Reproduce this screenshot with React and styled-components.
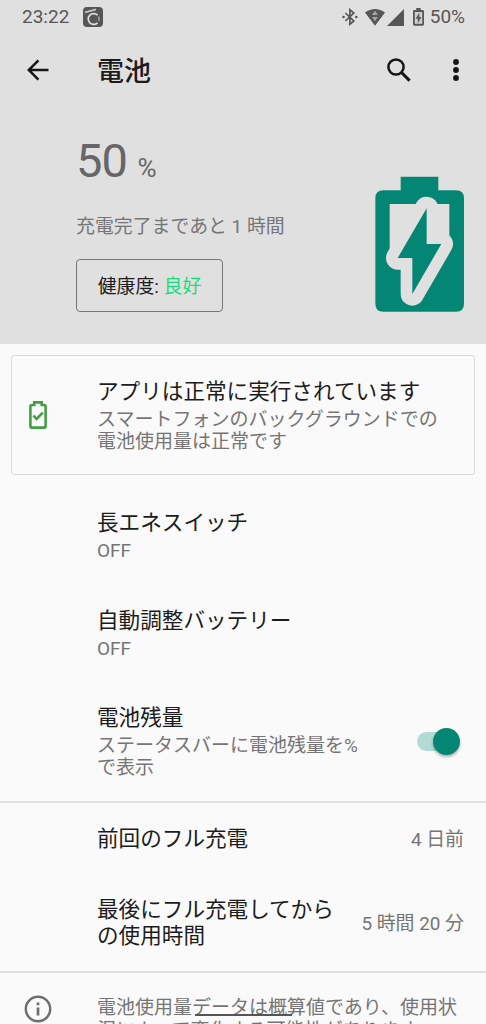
import styled, { createGlobalStyle } from "styled-components";

const GlobalStyle = createGlobalStyle`
  * {
    box-sizing: border-box;
  }

  body {
    margin: 0;
    background: #fafafa;
    color: #1c1c1c;
    font-family: Roboto, "Noto Sans CJK JP", sans-serif;
    overflow: hidden;
  }

  h1, h2, p {
    margin: 0;
    font-weight: 400;
  }

  svg {
    display: block;
    flex-shrink: 0;
  }
`;

function StatusIcons() {
  return (
    <StatusGroup>
      <svg width="16" height="18" viewBox="0 0 16 18">
        <path
          d="M3.4 5 11.8 13 7.9 16.3V1.7L11.8 5 3.4 13"
          fill="none"
          stroke="#565656"
          strokeWidth="1.7"
        />
        <circle cx="1.5" cy="9" r="1.3" fill="#565656" />
        <circle cx="14.3" cy="9" r="1.3" fill="#565656" />
      </svg>
      <svg width="20" height="17" viewBox="0 0 20 17">
        <path d="M0 3.6C5.8-1.1 14.2-1.1 20 3.6L10 16.7Z" fill="#565656" />
        <path d="M10 1.8 13 5.9H7ZM10 12.2 7 8H13Z" fill="#a5a5a5" />
      </svg>
      <svg width="17" height="17" viewBox="0 0 17 17">
        <path d="M17 0V17H0Z" fill="#565656" />
      </svg>
      <ChargeIcon width="11" height="18" viewBox="0 0 11 18">
        <path
          d="M3.3 0H7.7V2H9.6Q11 2 11 3.4V16.3Q11 17.7 9.6 17.7H1.4Q0 17.7 0 16.3V3.4Q0 2 1.4 2H3.3Z"
          fill="#565656"
        />
        <path d="M1.8 4H9.2V15.8H1.8Z" fill="#cfcfcf" />
        <path d="M6.3 4.5V9H8.5L4.8 15.3V10.8H2.6Z" fill="#565656" />
      </ChargeIcon>
      <span>50%</span>
    </StatusGroup>
  );
}

function BatteryGraphic() {
  const bolt = "M231 145V252H275L188 402V294H144Z";

  return (
    <svg width="90" height="136" viewBox="76 48 270 408">
      <path
        d="M153 50H266V91H319Q343 91 343 115V431Q343 455 319 455H101Q77 455 77 431V115Q77 91 101 91H153Z"
        fill="#048675"
      />
      <path d="M120 132H299V230L275 252L144 294L120 268Z" fill="#e0e0e0" />
      <path
        d={bolt}
        fill="#e0e0e0"
        stroke="#e0e0e0"
        strokeWidth="70"
        strokeLinejoin="round"
      />
      <path d={bolt} fill="#048675" />
    </svg>
  );
}

function App() {
  return (
    <>
      <GlobalStyle />
      <Screen>
        <Header>
          <StatusBar>
            <StatusGroup>
              <span>23:22</span>
              <AppBadge width="20" height="20" viewBox="0 0 20 20">
                <rect width="20" height="20" rx="4" fill="#565656" />
                <path
                  d="M14.5 8.2A5.4 5.4 0 1 0 14.5 15.8"
                  fill="none"
                  stroke="#dedede"
                  strokeWidth="1.7"
                />
                <path
                  d="M15.6 9.6A5.4 5.4 0 0 1 15.6 14"
                  fill="none"
                  stroke="#b5b5b5"
                  strokeWidth="1.2"
                />
                <path d="M2 5.4 13 2.4" stroke="#c4c4c4" strokeWidth="1.7" />
              </AppBadge>
            </StatusGroup>
            <StatusIcons />
          </StatusBar>

          <Toolbar>
            <svg width="22" height="22" viewBox="0 0 22 22">
              <path
                d="M21.5 11H2M11.4 1.3 1.7 11 11.4 20.7"
                fill="none"
                stroke="#151515"
                strokeWidth="2.5"
              />
            </svg>
            <h1>電池</h1>
            <svg width="24" height="24" viewBox="0 0 24 24">
              <circle
                cx="9"
                cy="9"
                r="7.6"
                fill="none"
                stroke="#151515"
                strokeWidth="2.5"
              />
              <path d="M14 14 22.6 22.6" stroke="#151515" strokeWidth="3.1" />
            </svg>
            <MoreIcon width="6" height="22" viewBox="0 0 6 22">
              <circle cx="3" cy="3" r="2.9" />
              <circle cx="3" cy="11" r="2.9" />
              <circle cx="3" cy="19" r="2.9" />
            </MoreIcon>
          </Toolbar>

          <Summary>
            <div>
              <Percent>
                50 <small>%</small>
              </Percent>
              <Remaining>充電完了まであと 1 時間</Remaining>
              <Health>
                健康度: <span>良好</span>
              </Health>
            </div>
            <BatteryGraphic />
          </Summary>
        </Header>

        <Card>
          <IconSlot>
            <svg width="18" height="28" viewBox="0 0 18 28">
              <path
                d="M5.3 1.4H12.7V4H15.2Q16.6 4 16.6 5.4V25.2Q16.6 26.6 15.2 26.6H2.8Q1.4 26.6 1.4 25.2V5.4Q1.4 4 2.8 4H5.3Z"
                fill="none"
                stroke="#43a047"
                strokeWidth="2.6"
              />
              <path
                d="M4.4 14.6 7.6 17.8 13.8 11.6"
                fill="none"
                stroke="#43a047"
                strokeWidth="2.6"
              />
            </svg>
          </IconSlot>
          <CardText>
            <Title>アプリは正常に実行されています</Title>
            <Description>
              スマートフォンのバックグラウンドでの
              <br />
              電池使用量は正常です
            </Description>
          </CardText>
        </Card>

        <Row $height={98}>
          <div>
            <Title>長エネスイッチ</Title>
            <Description>OFF</Description>
          </div>
        </Row>
        <Row $height={98}>
          <div>
            <Title>自動調整バッテリー</Title>
            <Description>OFF</Description>
          </div>
        </Row>
        <Row $height={118}>
          <div>
            <Title>電池残量</Title>
            <Description>
              ステータスバーに電池残量を%
              <br />
              で表示
            </Description>
          </div>
          <Toggle>
            <Thumb />
          </Toggle>
        </Row>

        <Divider />

        <Row $height={72}>
          <Title>前回のフル充電</Title>
          <Value>4 日前</Value>
        </Row>
        <Row $height={96}>
          <Title>
            最後にフル充電してから
            <br />
            の使用時間
          </Title>
          <Value>5 時間 20 分</Value>
        </Row>

        <Divider />

        <Footer>
          <IconSlot>
            <svg width="28" height="28" viewBox="0 0 28 28">
              <circle
                cx="14"
                cy="14"
                r="12.2"
                fill="none"
                stroke="#6d6d6d"
                strokeWidth="2.4"
              />
              <path d="M14 12.6V20.6M14 7.6V10.2" stroke="#6d6d6d" strokeWidth="2.7" />
            </svg>
          </IconSlot>
          <Description>
            電池使用量データは概算値であり、使用状
            <br />
            況によって変化する可能性があります
          </Description>
        </Footer>
        <HomeHandle />
      </Screen>
    </>
  );
}

const Screen = styled.main`
  position: relative;
  width: 486px;
  height: 1024px;
  overflow: hidden;
`;

const Header = styled.header`
  height: 344px;
  background: #e0e0e0;
`;

const StatusBar = styled.div`
  display: flex;
  justify-content: space-between;
  height: 34px;
  padding: 0 21px 0 22px;
`;

const StatusGroup = styled.div`
  display: flex;
  align-items: center;
  color: #565656;
  font-size: 19px;
  line-height: 34px;
  gap: 6px;

  svg + svg {
    margin-left: 1px;
  }

  svg + svg + svg {
    margin-left: -4px;
  }
`;

const ChargeIcon = styled.svg`
  && {
    margin-left: 3px;
  }
`;

const AppBadge = styled.svg`
  margin-left: 8px;
`;

const Toolbar = styled.div`
  display: flex;
  align-items: center;
  height: 72px;
  padding: 0 27px;

  h1 {
    flex: 1;
    margin-left: 48px;
    padding-top: 3px;
    font-size: 27px;
    font-weight: 500;
    line-height: 40px;
  }
`;

const MoreIcon = styled.svg`
  margin-left: 42px;
  fill: #151515;
`;

const Summary = styled.section`
  display: flex;
  justify-content: space-between;
  align-items: flex-end;
  height: 206px;
  padding: 0 21px 0 76px;
`;

const Percent = styled.p`
  color: #666;
  font-size: 47px;
  line-height: 56px;
  letter-spacing: -1px;

  small {
    font-size: 26px;
  }
`;

const Remaining = styled.p`
  margin-top: 17px;
  color: #757575;
  font-size: 18.9px;
  line-height: 28px;
`;

const Health = styled.div`
  width: 147px;
  height: 53px;
  margin: 18px 0 0;
  padding-top: 2px;
  border: 1.5px solid #777;
  border-radius: 4px;
  font-size: 18.9px;
  line-height: 50px;
  text-align: center;

  span {
    color: #1bdc7c;
  }
`;

const Card = styled.section`
  display: flex;
  align-items: center;
  height: 120px;
  margin: 11px 11px 12px;
  padding-left: 15px;
  border: 1px solid #d9d9d9;
  border-radius: 3px;
`;

const CardText = styled.div`
  padding-top: 2px;
`;

const IconSlot = styled.div`
  display: flex;
  flex-shrink: 0;
  width: 70px;
  padding-left: 2px;
`;

const Title = styled.h2`
  font-size: 21.6px;
  line-height: 26px;
`;

const Description = styled.p`
  margin-top: 4px;
  color: #757575;
  font-size: 19px;
  line-height: 22.5px;
  white-space: nowrap;
`;

const Row = styled.div`
  display: flex;
  justify-content: space-between;
  align-items: center;
  height: ${({ $height }) => $height}px;
  padding: 0 22px 0 97px;
`;

const Value = styled.p`
  padding-bottom: 4px;
  color: #757575;
  font-size: 18.9px;
`;

const Divider = styled.hr`
  height: 2px;
  margin: 0;
  border: 0;
  background: #e0e0e0;
`;

const Toggle = styled.div`
  display: flex;
  justify-content: flex-end;
  align-items: center;
  width: 41px;
  height: 19px;
  margin-right: 6px;
  margin-bottom: 2px;
  border-radius: 10px;
  background: #b2dbd4;
`;

const Thumb = styled.span`
  flex-shrink: 0;
  width: 27px;
  height: 27px;
  margin-right: -2px;
  border-radius: 50%;
  background: #048675;
  box-shadow: 0 2px 3px rgba(0, 0, 0, 0.3);
`;

const Footer = styled.footer`
  display: flex;
  align-items: flex-start;
  padding: 22px 0 0 22px;

  ${IconSlot} {
    width: 75px;
  }

  ${Description} {
    margin-top: 2px;
  }
`;

const HomeHandle = styled.div`
  position: absolute;
  bottom: 8px;
  left: 195px;
  width: 97px;
  height: 2px;
  background: #555;
`;

export default App;
